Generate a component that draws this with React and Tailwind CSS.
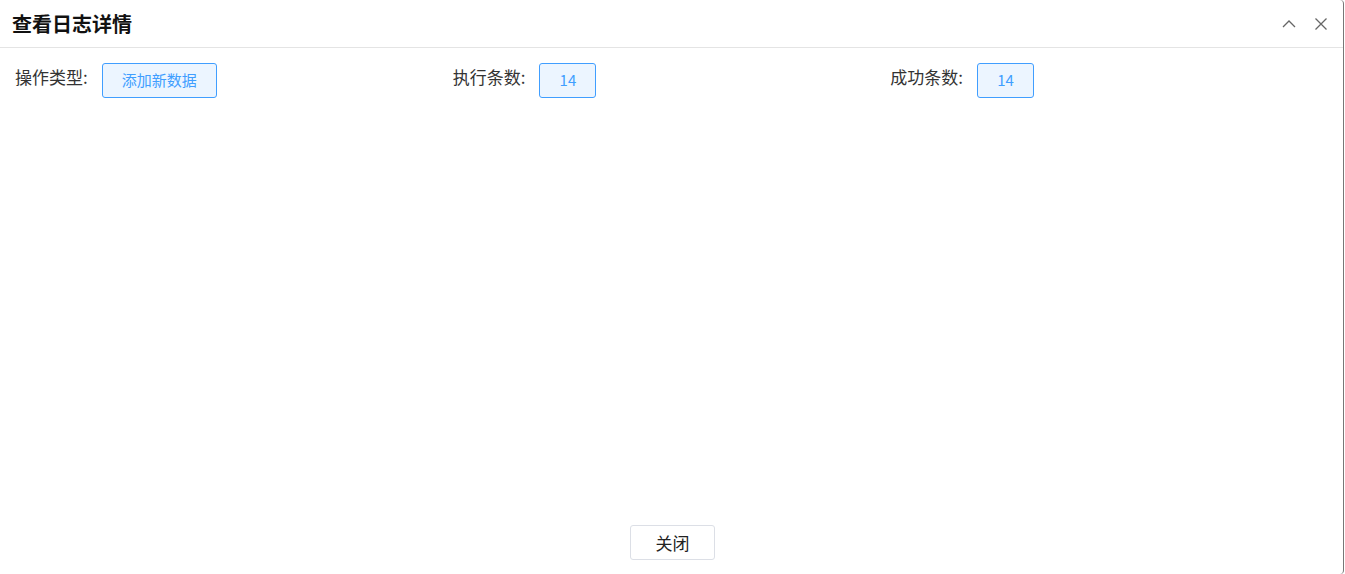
import React from 'react';

const FONT = { fontFamily: '"Microsoft YaHei", "Noto Sans CJK SC", "Noto Sans", sans-serif' };

function Field({ label, value, wide }) {
  return (
    <div className="flex items-start">
      <span className="text-[17px] leading-[28px] text-[#333] mr-[14px]">{label}</span>
      <span
        className={
          'h-[35px] flex items-center justify-center rounded-[3px] border border-[#409eff] bg-[#ecf5ff] text-[#409eff] text-[15px] ' +
          (wide ? 'w-[115px]' : 'w-[57px]')
        }
      >
        {value}
      </span>
    </div>
  );
}

export default function App() {
  return (
    <div className="w-[1345px] h-[574px] bg-white" style={FONT}>
      <div className="w-[1344px] h-[574px] flex flex-col rounded-[4px] border-r border-[#777] bg-white">
        <div className="h-[48px] flex items-center justify-between pl-[12px] pr-[14px] border-b border-[#e4e4e4]">
          <h2 className="text-[20px] font-bold text-[#111]">查看日志详情</h2>
          <div className="flex items-center gap-[16px] text-[#666]">
            <svg width="16" height="16" viewBox="0 0 16 16" fill="none" stroke="currentColor" strokeWidth="1.3">
              <path d="M2 11 L8 5 L14 11" />
            </svg>
            <svg width="16" height="16" viewBox="0 0 16 16" fill="none" stroke="currentColor" strokeWidth="1.3">
              <path d="M2.5 2.5 L13.5 13.5 M13.5 2.5 L2.5 13.5" />
            </svg>
          </div>
        </div>
        <div className="flex-1 px-[15px] pt-[15px]">
          <div className="grid grid-cols-3">
            <Field label="操作类型:" value="添加新数据" wide />
            <Field label="执行条数:" value="14" />
            <Field label="成功条数:" value="14" />
          </div>
        </div>
        <div className="flex justify-center pb-[14px] pl-[2px]">
          <button className="w-[85px] h-[35px] rounded-[3px] border border-[#dcdfe6] bg-white text-[17px] text-[#222]">
            关闭
          </button>
        </div>
      </div>
    </div>
  );
}
